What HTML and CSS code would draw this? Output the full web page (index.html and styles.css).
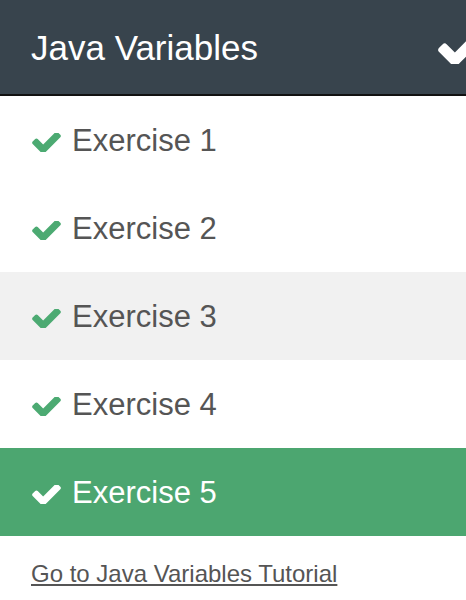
FILE: index.html
```html
<!DOCTYPE html>
<html>
<head>
<meta charset="utf-8">
<link rel="stylesheet" href="styles.css">
</head>
<body>
<div class="panel">
  <div class="header">
    <span class="title">Java Variables</span>
    <svg class="hcheck" viewBox="121 400 1550 1026"><path d="M1671 566q0 40-28 68l-724 724-136 136q-28 28-68 28t-68-28l-136-136-362-362q-28-28-28-68t28-68l136-136q28-28 68-28t68 28l294 295 656-657q28-28 68-28t68 28l136 136q28 28 28 68z"/></svg>
  </div>
  <ul class="list">
    <li class="item"><svg class="check" viewBox="121 400 1550 1026"><path d="M1671 566q0 40-28 68l-724 724-136 136q-28 28-68 28t-68-28l-136-136-362-362q-28-28-28-68t28-68l136-136q28-28 68-28t68 28l294 295 656-657q28-28 68-28t68 28l136 136q28 28 28 68z"/></svg><span>Exercise 1</span></li>
    <li class="item"><svg class="check" viewBox="121 400 1550 1026"><path d="M1671 566q0 40-28 68l-724 724-136 136q-28 28-68 28t-68-28l-136-136-362-362q-28-28-28-68t28-68l136-136q28-28 68-28t68 28l294 295 656-657q28-28 68-28t68 28l136 136q28 28 28 68z"/></svg><span>Exercise 2</span></li>
    <li class="item hover"><svg class="check" viewBox="121 400 1550 1026"><path d="M1671 566q0 40-28 68l-724 724-136 136q-28 28-68 28t-68-28l-136-136-362-362q-28-28-28-68t28-68l136-136q28-28 68-28t68 28l294 295 656-657q28-28 68-28t68 28l136 136q28 28 28 68z"/></svg><span>Exercise 3</span></li>
    <li class="item"><svg class="check" viewBox="121 400 1550 1026"><path d="M1671 566q0 40-28 68l-724 724-136 136q-28 28-68 28t-68-28l-136-136-362-362q-28-28-28-68t28-68l136-136q28-28 68-28t68 28l294 295 656-657q28-28 68-28t68 28l136 136q28 28 28 68z"/></svg><span>Exercise 4</span></li>
    <li class="item active"><svg class="check" viewBox="121 400 1550 1026"><path d="M1671 566q0 40-28 68l-724 724-136 136q-28 28-68 28t-68-28l-136-136-362-362q-28-28-28-68t28-68l136-136q28-28 68-28t68 28l294 295 656-657q28-28 68-28t68 28l136 136q28 28 28 68z"/></svg><span>Exercise 5</span></li>
  </ul>
  <div class="footer"><a class="link" href="#">Go to Java Variables Tutorial</a></div>
</div>
</body>
</html>
```

FILE: styles.css
```css
html, body {
  margin: 0;
  padding: 0;
  background: #ffffff;
  font-family: "Liberation Sans", Arial, sans-serif;
  overflow: hidden;
}
.panel {
  width: 466px;
}
.header {
  height: 94px;
  background: #38444d;
  border-bottom: 2px solid #111;
  display: flex;
  align-items: center;
  padding-left: 31px;
  position: relative;
  overflow: hidden;
}
.title {
  color: #ffffff;
  font-size: 35px;
  line-height: 1;
}
.hcheck {
  position: absolute;
  left: 438px;
  top: 35px;
  width: 44px;
  height: 29px;
  fill: #ffffff;
}
.list {
  list-style: none;
  margin: 0;
  padding: 0;
}
.item {
  height: 88px;
  display: flex;
  align-items: center;
  padding-left: 32px;
  color: #555555;
  font-size: 31px;
  gap: 11px;
}
.item span {
  margin-top: 2px;
}
.check {
  width: 29px;
  height: 19px;
  fill: #4caa72;
  flex: none;
  margin-top: 4px;
}
.item.hover {
  background: #f1f1f1;
}
.item.active {
  background: #4ca670;
  color: #ffffff;
}
.item.active .check {
  fill: #ffffff;
}
.footer {
  padding: 24px 0 0 31px;
}
.link {
  color: #555555;
  font-size: 24px;
  text-decoration: underline;
}
```
